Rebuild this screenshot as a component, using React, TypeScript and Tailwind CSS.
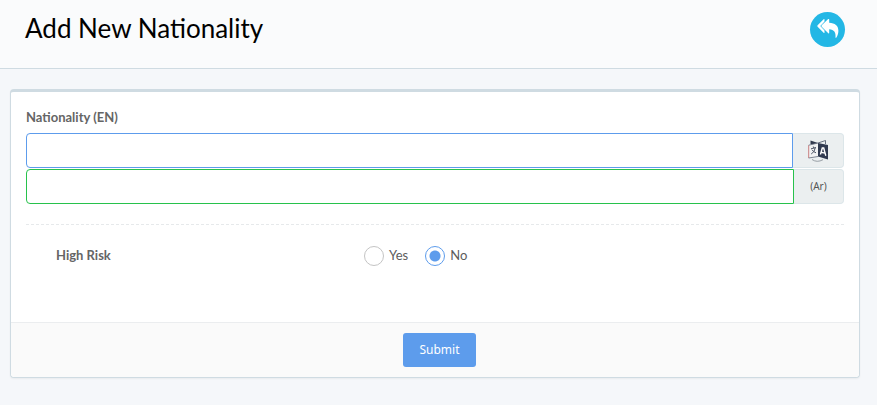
function ReplyAllIcon() {
  return (
    <svg viewBox="0 0 35 35" className="size-full" fill="#fff" aria-hidden="true">
      <path d="M14.500 7.600v1.800L10.300 14l4.200 4.600v1.800q0 1-.9.400L7.600 14.700q-.6-.7 0-1.400L13.600 7.200q.9-.5.900.4z" />
      <path d="M19.200 7.500v3.200c5.800.4 9.200 2.800 9.200 8 0 2.300-.7 4.700-2 6.900-.3.500-1 .3-.9-.3.500-5-1.300-7.600-6.300-8v3.500q0 1-.9.400L11.700 14.700q-.6-.7 0-1.400L18.200 7.100q1-.6 1 .4z" />
    </svg>
  );
}

function TranslateIcon() {
  return (
    <svg viewBox="0 0 20 22" className="h-[22px] w-5" fill="none" aria-hidden="true">
      <path d="M2.500 0.500L10 3v3L2.500 4z" fill="#30394d" />
      <path d="M10 3L17.500.5V4" stroke="#596273" strokeWidth=".9" />
      <path d="M.7 5.200L10 3v13.500L.7 18z" fill="#f1f2f3" />
      <path d="M.7 18V5.200" stroke="#c98080" strokeWidth="1" />
      <path d="M.7 5.200L10 3M.7 18l9.300-1.500" stroke="#5f6878" strokeWidth=".8" />
      <path d="M10 3l10 2v14.500L10 16.500z" fill="#303a50" />
      <path d="M3 8.800l5-1.300M5.300 6.500l.6 1.700M7.200 8q-.5 4-4 6M4 9.800q1.500 2.200 4 3" stroke="#4d5566" strokeWidth="1" />
      <path d="M12.400 14.500l1.900-6.500h1.400l2.100 7.800M13 12.300l3.900.8" stroke="#fff" strokeWidth="1.400" />
      <path d="M4 19.500q5 3.500 11 .2" stroke="#8d949c" strokeWidth=".9" />
    </svg>
  );
}

const addon =
  "flex shrink-0 items-center justify-center rounded-r border border-l-0 border-[#dce6e9] bg-[#ebeff0] font-['Noto_Sans',sans-serif] text-[10px] text-[#555]";

function RiskOption({ label, checked = false }: { label: string; checked?: boolean }) {
  return (
    <label className="flex items-center gap-[5px] text-[13px] text-[#5c5c5c]">
      <input
        type="radio"
        name="risk"
        defaultChecked={checked}
        className="size-5 appearance-none rounded-full border border-[#c4c4c4] bg-white checked:border-[#5d9cec] checked:bg-[radial-gradient(circle,#5d9cec_5px,#fff_6px)]"
      />
      {label}
    </label>
  );
}

export default function App() {
  return (
    <div className="min-h-screen bg-[#f5f7fa] font-[Lato,sans-serif]">
      <header className="flex h-[69px] items-start justify-between border-b border-[#cfdbe2] bg-[#fafbfc] pt-3 pr-8 pl-[25px]">
        <h1 className="text-[26px] leading-8 text-black">Add New Nationality</h1>
        <button type="button" aria-label="Back" className="size-[35px] rounded-full bg-[#23b7e5]">
          <ReplyAllIcon />
        </button>
      </header>
      <main className="pt-5 pr-[17px] pl-[10px]">
        <form className="rounded border border-t-[3px] border-[#cfdbe2] bg-white shadow-xs">
          <div className="px-[15px] pt-[15px] pb-14">
            <label htmlFor="name-en" className="mb-1.5 block text-[13px] leading-5 font-bold text-[#656565]">
              Nationality (EN)
            </label>
            <div className="flex h-[35px]">
              <input id="name-en" className="min-w-0 flex-1 rounded-l border border-[#5d9cec] px-3 outline-none" />
              <button type="button" aria-label="Translate" className={`${addon} w-[51px]`}>
                <TranslateIcon />
              </button>
            </div>
            <div className="mt-px flex h-[35px]">
              <input aria-label="Nationality (Ar)" dir="rtl" className="min-w-0 flex-1 rounded-l border border-[#27c24c] px-3 outline-none" />
              <span className={`${addon} w-[50px]`}>(Ar)</span>
            </div>
            <hr className="mt-5 border-dashed border-[#e6e9eb]" />
            <fieldset className="mt-[21px] flex items-center pl-[30px]">
              <legend className="float-left w-[308px] text-[13px] font-bold text-[#656565]">High Risk</legend>
              <div className="flex gap-[17px]">
                <RiskOption label="Yes" />
                <RiskOption label="No" checked />
              </div>
            </fieldset>
          </div>
          <footer className="flex justify-center rounded-b border-t border-[#ebedef] bg-[#fafafa] py-[10px] pl-[9px]">
            <button type="submit" className="h-[34px] rounded-[3px] bg-[#5d9cec] px-4 font-['Noto_Sans',sans-serif] text-[12px] text-white">
              Submit
            </button>
          </footer>
        </form>
      </main>
    </div>
  );
}
